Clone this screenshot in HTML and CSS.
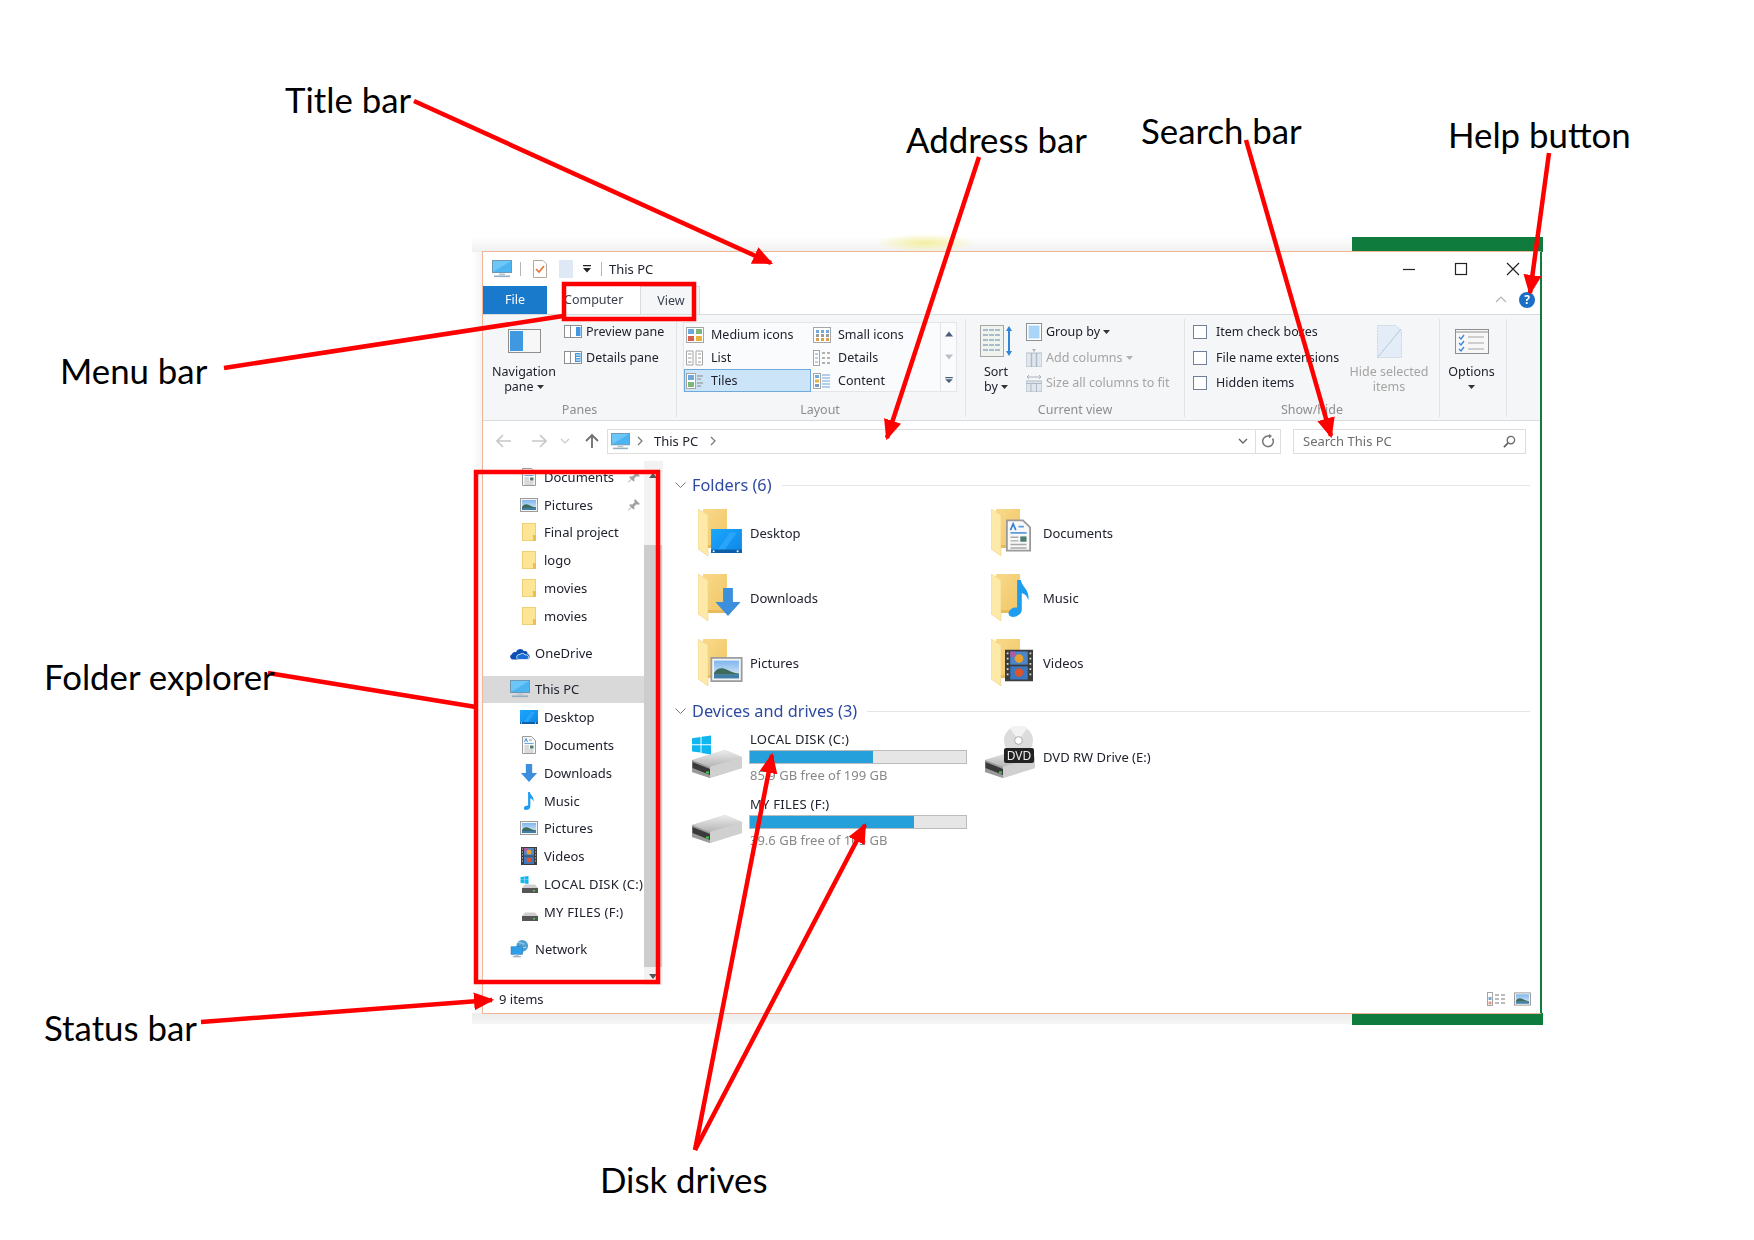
FILE: index.html
```html
<!DOCTYPE html>
<html lang="en">
<head>
<meta charset="utf-8">
<title>File Explorer parts</title>
<link rel="stylesheet" href="styles.css">
</head>
<body>
<svg class="defs" aria-hidden="true">
  <defs>
    <linearGradient id="g-screen" x1="0" y1="0" x2="1" y2="1"><stop offset="0" stop-color="#1aa7ff"/><stop offset="1" stop-color="#0f86e6"/></linearGradient>
    <linearGradient id="g-folder" x1="0" y1="0" x2="1" y2="1"><stop offset="0" stop-color="#f8d98a"/><stop offset="1" stop-color="#f2c666"/></linearGradient>
    <linearGradient id="g-drive" x1="0" y1="0" x2="0" y2="1"><stop offset="0" stop-color="#ececec"/><stop offset="1" stop-color="#b5b5b5"/></linearGradient>
    <linearGradient id="g-sky" x1="0" y1="0" x2="0" y2="1"><stop offset="0" stop-color="#7fb6ee"/><stop offset="1" stop-color="#e4eef6"/></linearGradient>
    <symbol id="i-pc" viewBox="0 0 20 18"><rect x=".5" y=".5" width="19" height="12" fill="#4db4f2" stroke="#6d98b3"/><path d="M1 12 L1 1 L19 1 Z" fill="#6cc6f7"/><rect x="7" y="13.5" width="6" height="1.5" fill="#b9c6cf"/><rect x="2" y="15.5" width="16" height="1.6" fill="#94aec0"/></symbol>
    <symbol id="i-desktop" viewBox="0 0 18 14"><rect width="18" height="14" fill="url(#g-screen)"/><path d="M4 12L11 2H15L8 12Z" fill="#3db4ff" opacity=".5"/><rect y="12" width="18" height="2" fill="#0b5fa8"/><rect x="1" y="12.5" width="1" height="1" fill="#fff"/><rect x="15" y="12.5" width="1" height="1" fill="#fff"/></symbol>
    <symbol id="i-doc" viewBox="0 0 14 18"><path d="M.5.5H9.5L13.5 4.5V17.5H.5Z" fill="#f8f8f8" stroke="#9a9a9a"/><path d="M2.500 6L4 2.500L5.500 6" fill="none" stroke="#2f7fd6" stroke-width=".9"/><path d="M7 4H10M2.500 7.500H11.500" stroke="#5f9bdc" stroke-width=".9"/><path d="M2.500 10H7M2.500 12H7M2.500 14H11.500M2.500 16H11.500" stroke="#a9a9a9" stroke-width=".8"/><rect x="8" y="9.500" width="3.500" height="3" fill="#4f7d74"/></symbol>
    <symbol id="i-pic" viewBox="0 0 18 14"><rect x=".5" y=".5" width="17" height="13" fill="#f4f4f4" stroke="#9c9c9c"/><rect x="2" y="2" width="14" height="10" fill="url(#g-sky)"/><path d="M2 9C4 5.500 7 6 9 7C11 8 13 9 16 9.300V10H2Z" fill="#3c6b5c"/><rect x="2" y="9.800" width="14" height="2.200" fill="#3f7ea8"/></symbol>
    <symbol id="i-fold" viewBox="0 0 14 18"><rect x=".5" y=".5" width="13" height="17" fill="#fde596" stroke="#f0cf70"/><rect x="11" y="12" width="3" height="6" fill="#eabf50"/></symbol>
    <symbol id="i-down" viewBox="0 0 18 20"><path d="M5.500 0H12.500V10H18L9 20L0 10H5.500Z" fill="#3b8fdc"/></symbol>
    <symbol id="i-note" viewBox="0 0 12 20"><path d="M5 0H7C7.500 4 12 5 11 11C10.500 8.500 9 7.500 7.500 7V16C7.500 18.500 5 20 2.500 20C0 20 -.5 17 2 15.500C3 15 4.500 14.800 5 15Z" fill="#1c9df0"/></symbol>
    <symbol id="i-film" viewBox="0 0 16 18"><rect width="16" height="18" fill="#3c3c3c"/><rect x="3" y="1" width="10" height="7.500" fill="#4a86c8"/><rect x="3" y="9.500" width="10" height="7.500" fill="#3a78c2"/><circle cx="8" cy="5" r="2.500" fill="#e9a02e"/><rect x="3" y="1" width="3" height="3" fill="#d84a9a" opacity=".7"/><circle cx="8" cy="13" r="2.500" fill="#d8552f"/><path d="M1 2H2M1 5H2M1 8H2M1 11H2M1 14H2M14 2H15M14 5H15M14 8H15M14 11H15M14 14H15" stroke="#ddd"/></symbol>
    <symbol id="i-drive-s" viewBox="0 0 16 9"><path d="M3 .5H13L16 4V9H0V4Z" fill="#cfcfcf"/><rect y="4" width="16" height="5" fill="#555"/><rect x="11" y="6" width="2" height="1.500" fill="#3fd04e"/></symbol>
    <symbol id="i-win" viewBox="0 0 20 20"><path d="M0 3L9 1.500V9.300H0ZM10 1.300L20 0V9.300H10ZM0 10.300H9V18L0 16.800ZM10 10.300H20V20L10 18.500Z" fill="#0fb6f0"/></symbol>
    <symbol id="i-cloud" viewBox="0 0 20 13"><path d="M3 13C0 13 -1 9 2 7.800C2.500 5.800 4.500 5 6 5.800C7.500 2 12 1.500 14 4.800C16 4 18 5.500 17.500 7.500C20.500 8 20.500 13 17 13Z" fill="#0c4fb3"/><path d="M8 13C5.500 11 7 7.500 10 8C11 6.500 14 6.500 15 8.300C17 8 19 9 18.800 11.500L17 13Z" fill="#1a6fd4" stroke="#fff" stroke-width=".8"/></symbol>
    <symbol id="i-net" viewBox="0 0 20 20"><circle cx="12.500" cy="6.500" r="6.500" fill="#4f9fd0"/><path d="M8 3C11 2 12 5 15 4.500M9 9C11 7 14 9 17 8" stroke="#bde0f5" fill="none"/><rect y="7.500" width="13" height="8.500" fill="#2e9ee8" stroke="#2d79b8" stroke-width=".6"/><rect x="4" y="16" width="5" height="1.500" fill="#a8bac6"/><rect x="2" y="18" width="9" height="1.200" fill="#8fa4b3"/></symbol>
    <symbol id="i-pin" viewBox="0 0 12 12"><path d="M7 0L12 5L10.500 5.800L8.500 5.300L6.200 7.600L6.500 9.800L5.500 10.500L3.500 8.500L.5 11.500L0 11L3 8L1.200 6.200L2 5.300L4.300 5.500L6.600 3.400L6.200 1.200Z" fill="#a0a0a0"/></symbol>
    <symbol id="i-bigfold" viewBox="0 0 46 48"><rect x="5" width="24" height="36" fill="url(#g-folder)"/><path d="M0 0L10 6V47L0 40Z" fill="#fde9a8" stroke="#f0d489" stroke-width=".6"/><path d="M10 36H29V39H10Z" fill="#e8bc5c"/></symbol>
    <symbol id="i-bigdrive" viewBox="0 0 50 28"><path d="M0 10L33 0L50 7V18L18 28L0 22Z" fill="#c9c9c9"/><path d="M0 10L33 0L50 7L18 17Z" fill="url(#g-drive)"/><path d="M0 10L18 17V28L0 22Z" fill="#9a9a9a"/><path d="M18 17L50 7V18L18 28Z" fill="#d0d0d0"/><path d="M.5 12L18 19V25L.5 18Z" fill="#3a3a3a"/><rect x="14" y="21.500" width="3" height="2" fill="#3fd04e"/></symbol>
    <symbol id="i-caret" viewBox="0 0 7 4"><path d="M0 0H7L3.500 4Z" fill="#333"/></symbol>
  </defs>
</svg>

<main class="canvas">
  <div class="backdrop backdrop-top"></div>
  <div class="backdrop backdrop-glow"></div>
  <div class="backdrop backdrop-left"></div>
  <div class="backdrop backdrop-bottom"></div>
  <div class="backdrop green-top"></div>
  <div class="backdrop green-bottom"></div>

  <section class="window">
    <header class="titlebar">
      <svg class="qa-pc"><use href="#i-pc"/></svg>
      <i class="qa-sep"></i>
      <svg class="qa-check" viewBox="0 0 14 18"><path d="M.5.5H10L13.500 4V17.500H.5Z" fill="#fff" stroke="#b5a89c"/><path d="M3 9L6 12L11 6" stroke="#e8743a" stroke-width="1.700" fill="none"/></svg>
      <svg class="qa-page" viewBox="0 0 14 18"><rect width="14" height="18" fill="#dfe8f5"/></svg>
      <svg class="qa-drop" viewBox="0 0 8 8"><path d="M0 0H8V1.200H0ZM0 3H8L4 7.500Z" fill="#222"/></svg>
      <i class="qa-sep qa-sep-2"></i>
      <span class="title-text">This PC</span>
      <div class="win-controls">
        <svg class="win-btn" viewBox="0 0 52 14"><path d="M20 7.500H32" stroke="#222" stroke-width="1.200"/></svg>
        <svg class="win-btn" viewBox="0 0 52 14"><rect x="20.500" y="1.500" width="11" height="11" fill="none" stroke="#222" stroke-width="1.200"/></svg>
        <svg class="win-btn" viewBox="0 0 52 14"><path d="M20 1L32 13M32 1L20 13" stroke="#222" stroke-width="1.200"/></svg>
      </div>
    </header>

    <nav class="tabs">
      <div class="tab-file">File</div>
      <div class="tab-computer">Computer</div>
      <div class="tab-view">View</div>
      <svg class="ribbon-up" viewBox="0 0 12 7"><path d="M1 6L6 1L11 6" fill="none" stroke="#b5b5b5" stroke-width="1.200"/></svg>
      <div class="help">?</div>
    </nav>

    <div class="ribbon">
      <div class="group group-panes">
        <div class="group-body">
          <div class="big big-nav">
            <svg class="big-icon-nav" viewBox="0 0 33 24"><rect x=".5" y=".5" width="32" height="23" fill="#f7f7f7" stroke="#8f8f8f"/><rect x="2" y="2" width="13" height="20" fill="#3f98e0"/></svg>
            <div class="big-text">Navigation<br>pane <svg class="caret"><use href="#i-caret"/></svg></div>
          </div>
          <div class="small-col">
            <div class="small"><svg class="sm-pane" viewBox="0 0 18 13"><rect x=".5" y=".5" width="17" height="12" fill="#fff" stroke="#8f8f8f"/><path d="M6.500 1V12" stroke="#8f8f8f"/><rect x="12" y="2" width="4.500" height="9" fill="#3f98e0"/></svg><span>Preview pane</span></div>
            <div class="small"><svg class="sm-pane" viewBox="0 0 18 13"><rect x=".5" y=".5" width="17" height="12" fill="#fff" stroke="#8f8f8f"/><path d="M6.500 1V12" stroke="#8f8f8f"/><rect x="11" y="2" width="5.500" height="9" fill="#3f98e0"/><path d="M12 4H16M12 6.500H16M12 9H16" stroke="#fff"/></svg><span>Details pane</span></div>
          </div>
        </div>
        <div class="group-label">Panes</div>
      </div>

      <div class="group group-layout">
        <div class="group-body">
          <div class="gallery">
            <div class="gallery-grid">
              <div class="gal"><svg class="gal-icon" viewBox="0 0 18 16"><rect x=".5" y=".5" width="17" height="15" fill="#fff" stroke="#a5a5a5"/><rect x="2" y="2" width="6" height="5" fill="#6fa8dc"/><rect x="10" y="2" width="6" height="5" fill="#7cb87c"/><rect x="2" y="9" width="6" height="5" fill="#d8604c"/><rect x="10" y="9" width="6" height="5" fill="#e8b23c"/></svg><span>Medium icons</span></div>
              <div class="gal"><svg class="gal-icon" viewBox="0 0 18 16"><rect x=".5" y=".5" width="17" height="15" fill="#fff" stroke="#a5a5a5"/><path d="M3 3h3v3h-3zM8 3h3v3h-3zM13 3h3v3h-3z" fill="#6fa8dc"/><path d="M3 7h3v3h-3zM8 7h3v3h-3zM13 7h3v3h-3z" fill="#9a9a9a"/><path d="M3 11h3v3h-3zM8 11h3v3h-3zM13 11h3v3h-3z" fill="#d8a04c"/></svg><span>Small icons</span></div>
              <div class="gal"><svg class="gal-icon" viewBox="0 0 18 16"><path d="M.5 1H7V15H.5ZM10 1H16.500V15H10Z" fill="#fff" stroke="#a5a5a5"/><path d="M2 4H5.500M2 8H5.500M2 12H5.500M12 4H15M12 8H15M12 12H15" stroke="#999"/></svg><span>List</span></div>
              <div class="gal"><svg class="gal-icon" viewBox="0 0 18 16"><rect x=".5" y=".5" width="6" height="15" fill="#fff" stroke="#a5a5a5"/><path d="M2 4H5M2 8H5M2 12H5" stroke="#7a9cc0"/><path d="M9 3H12M14 3H17M9 8H12M14 8H17M9 13H12M14 13H17" stroke="#999" stroke-width="1.300"/></svg><span>Details</span></div>
              <div class="gal gal-on"><svg class="gal-icon" viewBox="0 0 18 16"><rect x=".5" y=".5" width="9" height="15" fill="#fff" stroke="#a5a5a5"/><rect x="2" y="2" width="6" height="5" fill="#6fa8dc"/><rect x="2" y="9" width="6" height="5" fill="#7cb87c"/><path d="M11 3H17M11 6H15M11 10H17M11 13H15" stroke="#888"/></svg><span>Tiles</span></div>
              <div class="gal"><svg class="gal-icon" viewBox="0 0 18 16"><rect x=".5" y=".5" width="7" height="15" fill="#fff" stroke="#a5a5a5"/><rect x="2" y="2" width="4" height="3" fill="#6fa8dc"/><rect x="2" y="6.500" width="4" height="3" fill="#e8b23c"/><rect x="2" y="11" width="4" height="3" fill="#7a9cc0"/><path d="M9 2H17M9 5H17M9 8H17M9 11H17M9 14H17" stroke="#6aa3de"/></svg><span>Content</span></div>
            </div>
            <div class="gallery-scroll">
              <svg class="gal-arrow" viewBox="0 0 10 6"><path d="M5 0L10 6H0Z" fill="#4c5f78"/></svg>
              <svg class="gal-arrow" viewBox="0 0 10 6"><path d="M0 0H10L5 6Z" fill="#b9bfc7"/></svg>
              <svg class="gal-arrow" viewBox="0 0 10 8"><path d="M0 0H10V1.500H0ZM0 3H10L5 8Z" fill="#4c5f78"/></svg>
            </div>
          </div>
        </div>
        <div class="group-label">Layout</div>
      </div>

      <div class="group group-view">
        <div class="group-body">
          <div class="big big-sort">
            <svg class="big-icon-sort" viewBox="0 0 33 32"><rect x=".5" y=".5" width="23" height="31" fill="#eef3ee" stroke="#a5a5a5"/><path d="M3 5H21M3 10H21M3 15H21M3 20H21M3 25H21" stroke="#a8bcd0" stroke-width="2" stroke-dasharray="5 1"/><path d="M29 1L32 6H30V26H32L29 31L26 26H28V6H26Z" fill="#2f86d6"/></svg>
            <div class="big-text">Sort<br>by <svg class="caret"><use href="#i-caret"/></svg></div>
          </div>
          <div class="small-col">
            <div class="small"><svg class="sm-view" viewBox="0 0 16 18"><rect x=".5" y=".5" width="15" height="17" fill="#fff" stroke="#8f8f8f"/><rect x="2.500" y="2.500" width="11" height="13" fill="#a9d5f7"/></svg><span>Group by <svg class="caret"><use href="#i-caret"/></svg></span></div>
            <div class="small small-off"><svg class="sm-view" viewBox="0 0 16 18"><rect y="4" width="16" height="14" fill="#dfe6ee" stroke="#b5bec8"/><path d="M5.500 4V18M10.500 4V18" stroke="#aeb9c5" stroke-width="1.400"/><path d="M6 0H10L8 3Z" fill="#a8b3bf"/></svg><span>Add columns <svg class="caret caret-off"><use href="#i-caret"/></svg></span></div>
            <div class="small small-off"><svg class="sm-view" viewBox="0 0 16 18"><path d="M1 3H15M3 1L1 3L3 5M13 1L15 3L13 5" stroke="#a8b3bf" fill="none"/><rect y="7" width="16" height="11" fill="#dfe6ee" stroke="#aeb9c5"/><path d="M0 9.500H16M5 9.500V18M10.500 9.500V18" stroke="#aeb9c5"/></svg><span>Size all columns to fit</span></div>
          </div>
        </div>
        <div class="group-label">Current view</div>
      </div>

      <div class="group group-show">
        <div class="group-body">
          <div class="small-col check-col">
            <label class="small"><i class="check"></i><span>Item check boxes</span></label>
            <label class="small"><i class="check"></i><span>File name extensions</span></label>
            <label class="small"><i class="check"></i><span>Hidden items</span></label>
          </div>
          <div class="big big-hide">
            <svg class="big-icon-hide" viewBox="0 0 25 33"><path d="M.5.5H19L24.500 6V32.500H.5Z" fill="#e4ecf7" stroke="#c9d6e6" stroke-dasharray="2 1"/><path d="M.5 32.500L24 4" stroke="#b5c6db"/></svg>
            <div class="big-text big-text-off">Hide selected<br>items</div>
          </div>
        </div>
        <div class="group-label">Show/hide</div>
      </div>

      <div class="group group-options">
        <div class="group-body">
          <div class="big big-options">
            <svg class="big-icon-options" viewBox="0 0 34 25"><rect x=".5" y=".5" width="33" height="24" fill="#f7f7f7" stroke="#8f8f8f"/><path d="M.5 3H33.500" stroke="#8f8f8f"/><path d="M4 8L6 10L9 6M4 14L6 16L9 12M4 20L6 22L9 18" stroke="#3b85d6" stroke-width="1.300" fill="none"/><path d="M13 8H29M13 14H29M13 20H29" stroke="#a5a5a5"/></svg>
            <div class="big-text">Options<br><svg class="caret"><use href="#i-caret"/></svg></div>
          </div>
        </div>
        <div class="group-label"></div>
      </div>
    </div>

    <div class="addressbar">
      <svg class="nav-back" viewBox="0 0 16 14"><path d="M1 7H15M7 1L1 7L7 13" fill="none" stroke="#c8c8c8" stroke-width="1.600"/></svg>
      <svg class="nav-fwd" viewBox="0 0 16 14"><path d="M1 7H15M9 1L15 7L9 13" fill="none" stroke="#c8c8c8" stroke-width="1.600"/></svg>
      <svg class="nav-hist" viewBox="0 0 10 6"><path d="M1 1L5 5L9 1" fill="none" stroke="#c8c8c8" stroke-width="1.200"/></svg>
      <svg class="nav-up" viewBox="0 0 16 16"><path d="M8 15V2M2 8L8 2L14 8" fill="none" stroke="#6e6e6e" stroke-width="1.800"/></svg>
      <div class="addr-box">
        <svg class="addr-pc"><use href="#i-pc"/></svg>
        <svg class="crumb" viewBox="0 0 6 10"><path d="M1 1L5 5L1 9" fill="none" stroke="#777" stroke-width="1.200"/></svg>
        <span class="addr-text">This PC</span>
        <svg class="crumb crumb-end" viewBox="0 0 6 10"><path d="M1 1L5 5L1 9" fill="none" stroke="#777" stroke-width="1.200"/></svg>
        <svg class="addr-chev" viewBox="0 0 10 6"><path d="M1 1L5 5L9 1" fill="none" stroke="#666" stroke-width="1.400"/></svg>
        <div class="addr-refresh"><svg class="refresh-icon" viewBox="0 0 14 14"><path d="M11.500 4.500A5.300 5.300 0 1 1 7 2H10" fill="none" stroke="#777" stroke-width="1.500"/><path d="M8 0L11 2L8 4.500Z" fill="#777"/></svg></div>
      </div>
      <div class="search-box">
        <span>Search This PC</span>
        <svg class="search-icon" viewBox="0 0 14 14"><circle cx="8.500" cy="5.500" r="4" fill="none" stroke="#666" stroke-width="1.400"/><path d="M5.500 8.500L1 13" stroke="#666" stroke-width="2"/></svg>
      </div>
    </div>

    <div class="body">
      <aside class="sidebar">
        <div class="tree">
          <div class="row lv2"><svg class="ti ti-tall"><use href="#i-doc"/></svg><span>Documents</span><svg class="pin"><use href="#i-pin"/></svg></div>
          <div class="row lv2"><svg class="ti ti-wide"><use href="#i-pic"/></svg><span>Pictures</span><svg class="pin"><use href="#i-pin"/></svg></div>
          <div class="row lv2"><svg class="ti ti-tall"><use href="#i-fold"/></svg><span>Final project</span></div>
          <div class="row lv2"><svg class="ti ti-tall"><use href="#i-fold"/></svg><span>logo</span></div>
          <div class="row lv2"><svg class="ti ti-tall"><use href="#i-fold"/></svg><span>movies</span></div>
          <div class="row lv2"><svg class="ti ti-tall"><use href="#i-fold"/></svg><span>movies</span></div>
          <div class="row lv1 tree-gap"><svg class="ti ti-root"><use href="#i-cloud"/></svg><span>OneDrive</span></div>
          <div class="row lv1 tree-gap row-on"><svg class="ti ti-root"><use href="#i-pc"/></svg><span>This PC</span></div>
          <div class="row lv2"><svg class="ti ti-wide"><use href="#i-desktop"/></svg><span>Desktop</span></div>
          <div class="row lv2"><svg class="ti ti-tall"><use href="#i-doc"/></svg><span>Documents</span></div>
          <div class="row lv2"><svg class="ti ti-tall"><use href="#i-down"/></svg><span>Downloads</span></div>
          <div class="row lv2"><svg class="ti ti-tall"><use href="#i-note"/></svg><span>Music</span></div>
          <div class="row lv2"><svg class="ti ti-wide"><use href="#i-pic"/></svg><span>Pictures</span></div>
          <div class="row lv2"><svg class="ti ti-tall"><use href="#i-film"/></svg><span>Videos</span></div>
          <div class="row lv2"><span class="ti-stack"><svg class="ti-win"><use href="#i-win"/></svg><svg class="ti-drive"><use href="#i-drive-s"/></svg></span><span class="caps">LOCAL DISK (C:)</span></div>
          <div class="row lv2"><span class="ti-stack"><svg class="ti-drive"><use href="#i-drive-s"/></svg></span><span class="caps">MY FILES (F:)</span></div>
          <div class="row lv1 tree-gap"><svg class="ti ti-root"><use href="#i-net"/></svg><span>Network</span></div>
        </div>
        <div class="scrollbar">
          <svg class="scroll-top" viewBox="0 0 8 5"><path d="M4 0L8 5H0Z" fill="#555"/></svg>
          <div class="thumb"></div>
          <svg class="scroll-bot" viewBox="0 0 8 5"><path d="M0 0H8L4 5Z" fill="#555"/></svg>
        </div>
      </aside>

      <div class="content">
        <div class="sect">
          <svg class="sect-chev" viewBox="0 0 11 6"><path d="M.5.5L5.500 5.500L10.500.5" fill="none" stroke="#7a7a7a"/></svg>
          <span class="sect-title">Folders (6)</span><i class="sect-line"></i>
        </div>
        <div class="tiles">
          <div class="tile"><span class="folder"><svg class="folder-base"><use href="#i-bigfold"/></svg><svg class="ov ov-desktop"><use href="#i-desktop"/></svg></span><span>Desktop</span></div>
          <div class="tile"><span class="folder"><svg class="folder-base"><use href="#i-bigfold"/></svg><svg class="ov ov-doc"><use href="#i-doc"/></svg></span><span>Documents</span></div>
          <div class="tile"><span class="folder"><svg class="folder-base"><use href="#i-bigfold"/></svg><svg class="ov ov-down"><use href="#i-down"/></svg></span><span>Downloads</span></div>
          <div class="tile"><span class="folder"><svg class="folder-base"><use href="#i-bigfold"/></svg><svg class="ov ov-note"><use href="#i-note"/></svg></span><span>Music</span></div>
          <div class="tile"><span class="folder"><svg class="folder-base"><use href="#i-bigfold"/></svg><svg class="ov ov-pic"><use href="#i-pic"/></svg></span><span>Pictures</span></div>
          <div class="tile"><span class="folder"><svg class="folder-base"><use href="#i-bigfold"/></svg><svg class="ov ov-film"><use href="#i-film"/></svg></span><span>Videos</span></div>
        </div>
        <div class="sect">
          <svg class="sect-chev" viewBox="0 0 11 6"><path d="M.5.5L5.500 5.500L10.500.5" fill="none" stroke="#7a7a7a"/></svg>
          <span class="sect-title">Devices and drives (3)</span><i class="sect-line"></i>
        </div>
        <div class="drives">
          <div class="drive">
            <span class="drive-icon"><svg class="drive-win"><use href="#i-win"/></svg><svg class="drive-hdd"><use href="#i-bigdrive"/></svg></span>
            <div class="drive-info"><div class="caps">LOCAL DISK (C:)</div><div class="meter"><div class="meter-fill" style="width:57%"></div></div><div class="drive-free">85.9 GB free of 199 GB</div></div>
          </div>
          <div class="drive">
            <span class="drive-icon"><svg class="drive-hdd"><use href="#i-bigdrive"/></svg><svg class="drive-disc" viewBox="0 0 30 30"><circle cx="15" cy="15" r="15" fill="#dcdcdc"/><path d="M15 15L6 2A15 15 0 0 1 24 2Z" fill="#f2f2f2"/><circle cx="15" cy="15" r="4" fill="#fff" stroke="#aaa"/></svg><b class="dvd-badge">DVD</b></span>
            <div class="drive-name">DVD RW Drive (E:)</div>
          </div>
          <div class="drive">
            <span class="drive-icon"><svg class="drive-hdd"><use href="#i-bigdrive"/></svg></span>
            <div class="drive-info"><div class="caps">MY FILES (F:)</div><div class="meter"><div class="meter-fill" style="width:76%"></div></div><div class="drive-free">39.6 GB free of 165 GB</div></div>
          </div>
        </div>
      </div>
    </div>

    <footer class="status">
      <span>9 items</span>
      <svg class="st-details" viewBox="0 0 19 14"><rect x=".5" y=".5" width="5" height="13" fill="#fff" stroke="#a5a5a5"/><rect x="1.500" y="5" width="3" height="3" fill="#7aa7d6"/><rect x="1.500" y="9.500" width="3" height="3" fill="#e09a8a"/><path d="M8 3H12M14 3H18M8 7H12M14 7H18M8 11H12M14 11H18" stroke="#a5a5a5" stroke-width="1.300"/></svg>
      <svg class="st-tiles"><use href="#i-pic"/></svg>
    </footer>
  </section>

  <svg class="overlay" viewBox="0 0 1754 1240">
    <defs><marker id="head" markerWidth="4.500" markerHeight="4" refX="4" refY="2" orient="auto"><path d="M0 0L4.500 2L0 4Z" fill="#f00"/></marker></defs>
    <g fill="none" stroke="#f00" stroke-width="4.500">
      <rect x="564" y="284" width="130" height="35"/>
      <rect x="476" y="472" width="182" height="510"/>
      <path d="M414 101L771 263" marker-end="url(#head)"/>
      <path d="M979 157L887 438" marker-end="url(#head)"/>
      <path d="M1246 140L1331 436" marker-end="url(#head)"/>
      <path d="M1549 153L1530 293" marker-end="url(#head)"/>
      <path d="M224 368L563 316"/>
      <path d="M268 673L476 707"/>
      <path d="M201 1022L492 1000" marker-end="url(#head)"/>
      <path d="M695 1150L772 755" marker-end="url(#head)"/>
      <path d="M695 1150L865 825" marker-end="url(#head)"/>
    </g>
  </svg>

  <div class="callout c-title">Title bar</div>
  <div class="callout c-address">Address bar</div>
  <div class="callout c-search">Search bar</div>
  <div class="callout c-help">Help button</div>
  <div class="callout c-menu">Menu bar</div>
  <div class="callout c-folder">Folder explorer</div>
  <div class="callout c-status">Status bar</div>
  <div class="callout c-disk">Disk drives</div>
</main>
</body>
</html>
```

FILE: styles.css
```css
* { box-sizing: border-box; }
html, body { margin: 0; padding: 0; background: #fff; }
body { font-family: "Noto Sans", "Open Sans", sans-serif; color: #20222e; }
svg { display: block; flex: none; }
.defs { position: absolute; width: 0; height: 0; }

.canvas { position: relative; width: 1754px; height: 1240px; overflow: hidden; background: #fff; }

/* what lies behind the window in the photographed figure */
.backdrop { position: absolute; }
.backdrop-top { left: 472px; top: 237px; width: 881px; height: 15px; background: linear-gradient(#fff, #f0f0f0); }
.backdrop-glow { left: 875px; top: 234px; width: 100px; height: 18px; background: radial-gradient(closest-side, #f3efa0, rgba(243, 239, 160, 0)); }
.backdrop-left { left: 472px; top: 252px; width: 10px; height: 761px; background: linear-gradient(90deg, #fff, #f4f4f4); }
.backdrop-bottom { left: 472px; top: 1013px; width: 881px; height: 11px; background: linear-gradient(#ececec, #f6f6f6); }
.green-top { left: 1352px; top: 237px; width: 191px; height: 15px; background: #0f7c3e; }
.green-bottom { left: 1352px; top: 1013px; width: 191px; height: 12px; background: #0f7c3e; }

/* window */
.window {
  position: absolute; left: 482px; top: 251px; width: 1060px; height: 763px;
  display: flex; flex-direction: column;
  background: #fff; border: 1px solid #eeb596; border-right: 2px solid #0f7c3e;
  font-size: 13px; line-height: 16px;
  filter: blur(.5px);
}
.caps { letter-spacing: .25px; }

.titlebar { height: 34px; display: flex; align-items: center; flex: none; }
.qa-pc { width: 20px; height: 18px; margin-left: 9px; }
.qa-sep { width: 1px; height: 14px; background: #b5b5b5; margin-left: 8px; }
.qa-check { width: 14px; height: 18px; margin-left: 12px; }
.qa-page { width: 14px; height: 18px; margin-left: 12px; }
.qa-drop { width: 8px; height: 8px; margin-left: 10px; }
.qa-sep-2 { margin-left: 10px; }
.title-text { margin: -1px 0 0 7px; }
.win-controls { margin: -1px 1px 0 auto; display: flex; }
.win-btn { width: 52px; height: 14px; }

.tabs { height: 28px; display: flex; flex: none; align-items: stretch; position: relative; font-size: 12.500px; }
.tab-file { width: 64px; background: #1979ca; color: #fff; text-align: center; line-height: 27px; }
.tab-computer { width: 93px; padding-left: 17px; line-height: 28px; color: #3a3f4c; }
.tab-view { width: 60px; padding-left: 2px; text-align: center; line-height: 27px; background: #f5f6f7; border: 1px solid #dadbdc; border-bottom: 0; color: #3a3f4c; }
.ribbon-up { width: 12px; height: 7px; margin: 10px 0 0 auto; }
.help { width: 16px; height: 16px; margin: 6px 5px 0 12px; border-radius: 50%; background: #1a6fc4; color: #fff; font-size: 12px; font-weight: 700; line-height: 16px; text-align: center; }

.ribbon { height: 107px; flex: none; display: flex; background: #f5f6f7; border-top: 1px solid #dadbdc; border-bottom: 1px solid #dadbdc; }
.group { margin: 4px 0 3px; display: flex; flex-direction: column; border-right: 1px solid #e2e3e4; flex: none; }
.group-panes { width: 194px; }
.group-layout { width: 289px; padding-left: 6px; }
.group-layout .group-label { margin-right: 8px; }
.group-view { width: 219px; }
.group-show { width: 255px; }
.group-options { width: 67px; }
.group-body { height: 83px; display: flex; flex: none; }
.group-label { height: 15px; text-align: center; color: #8e8e8e; line-height: 16px; font-size: 12.500px; }

.big { display: flex; flex-direction: column; align-items: center; flex: none; }
.big-text { text-align: center; line-height: 15px; margin-top: auto; padding-bottom: 8px; font-size: 12.500px; }
.big-text-off { color: #a4a4a4; }
.big-nav { width: 80px; margin-left: 1px; }
.big-icon-nav { width: 33px; height: 24px; margin-top: 10px; }
.big-sort { width: 60px; }
.big-icon-sort { width: 33px; height: 32px; margin-top: 6px; }
.big-hide { width: 84px; margin-left: 1px; }
.big-icon-hide { width: 25px; height: 33px; margin-top: 6px; }
.big-options { width: 63px; }
.big-icon-options { width: 34px; height: 25px; margin-top: 10px; }
.caret { width: 7px; height: 4px; display: inline-block; vertical-align: 2px; }
.caret-off { opacity: .35; }

.small-col { display: flex; flex-direction: column; }
.small { height: 25.750px; display: flex; align-items: center; gap: 4px; white-space: nowrap; font-size: 12.500px; }
.small-off { color: #a4a4a4; }
.sm-pane { width: 18px; height: 13px; }
.sm-view { width: 16px; height: 18px; }
.check-col { width: 161px; padding-left: 8px; }
.check { width: 14px; height: 14px; border: 1px solid #6f7f98; background: #fff; margin-right: 5px; }

.gallery { width: 274px; height: 70px; margin-top: 3px; display: flex; background: #fafbfc; border: 1px solid #e3e5e8; }
.gallery-grid { flex: 1; display: grid; grid-template-columns: 127px 129px; grid-auto-rows: 23px; }
.gal { display: flex; align-items: center; gap: 7px; padding-left: 2px; font-size: 12.500px; }
.gal-on { background: #cce4f7; outline: 1px solid #6ea9de; outline-offset: -1px; }
.gal-icon { width: 18px; height: 16px; }
.gallery-scroll { width: 16px; display: flex; flex-direction: column; align-items: center; justify-content: space-around; border-left: 1px solid #e3e5e8; }
.gal-arrow { width: 8px; height: 6px; }

/* address row */
.addressbar { height: 40px; flex: none; display: flex; align-items: center; }
.nav-back { width: 16px; height: 14px; margin-left: 13px; }
.nav-fwd { width: 16px; height: 14px; margin-left: 19px; }
.nav-hist { width: 10px; height: 6px; margin-left: 13px; }
.nav-up { width: 16px; height: 16px; margin-left: 14px; }
.addr-box { width: 674px; height: 25px; margin-left: 7px; border: 1px solid #dedede; display: flex; align-items: center; }
.addr-pc { width: 19px; height: 17px; margin-left: 3px; }
.crumb { width: 6px; height: 10px; margin-left: 7px; }
.addr-text { margin-left: 11px; }
.crumb-end { margin-left: 12px; }
.addr-chev { width: 10px; height: 6px; margin-left: auto; }
.addr-refresh { width: 25px; height: 23px; margin-left: 7px; border-left: 1px solid #dedede; display: flex; align-items: center; justify-content: center; }
.refresh-icon { width: 14px; height: 14px; }
.search-box { width: 233px; height: 25px; margin-left: 12px; border: 1px solid #dedede; display: flex; align-items: center; justify-content: space-between; padding: 0 9px; color: #6d6d6d; }
.search-icon { width: 13px; height: 13px; }

/* body */
.body { flex: 1; min-height: 0; display: flex; }
.sidebar { width: 180px; flex: none; display: flex; overflow: hidden; border-right: 1px solid #f3f3f3; }
.tree { width: 161px; padding-top: 2px; flex: none; }
.row { height: 27.800px; display: flex; align-items: center; white-space: nowrap; }
.lv2 { padding-left: 37px; }
.lv1 { padding-left: 27px; }
.tree-gap { margin-top: 9px; }
.row-on { background: #d9d9d9; margin-top: 9px; }
.ti { width: 18px; height: 18px; margin-right: 6px; }
.ti-tall { width: 18px; height: 18px; }
.ti-wide { width: 18px; height: 14px; }
.ti-root { width: 20px; height: 18px; margin-right: 5px; }
.ti-stack { width: 18px; height: 20px; margin-right: 6px; display: flex; flex-direction: column; justify-content: flex-end; align-items: flex-end; padding-bottom: 1px; }
.ti-win { width: 9px; height: 8px; align-self: flex-start; }
.ti-drive { width: 16px; height: 9px; }
.pin { width: 12px; height: 12px; margin-left: auto; margin-right: 4px; }

.scrollbar { width: 18px; flex: none; background: #f2f2f2; display: flex; flex-direction: column; align-items: center; }
.scroll-top { width: 8px; height: 5px; margin-top: 12px; }
.thumb { width: 100%; height: 422px; margin-top: 67px; background: #cdcdcd; }
.scroll-bot { width: 8px; height: 5px; margin-top: 7px; }

.content { flex: 1; min-width: 0; padding: 12px 10px 0 12px; }
.sect { height: 24px; display: flex; align-items: center; }
.sect-chev { width: 11px; height: 6px; margin-right: 6px; }
.sect-title { font-size: 16.300px; color: #2d4aa0; line-height: 24px; }
.sect-line { flex: 1; height: 1px; background: #e5e5e5; margin-left: 10px; }

.tiles, .drives { display: grid; grid-template-columns: 293px 293px; padding-left: 23px; }
.tiles { grid-auto-rows: 65px; margin: 3px 0 4px; }
.drives { grid-auto-rows: 65px; margin-top: 1px; }
.tile { display: flex; align-items: center; gap: 6px; }
.folder { position: relative; width: 46px; height: 48px; flex: none; }
.folder-base { width: 46px; height: 48px; }
.ov { position: absolute; }
.ov-desktop { left: 12px; top: 20px; width: 33px; height: 24px; }
.ov-doc { left: 15px; top: 10px; width: 25px; height: 33px; }
.ov-down { left: 16px; top: 14px; width: 28px; height: 28px; }
.ov-note { left: 16px; top: 6px; width: 24px; height: 37px; }
.ov-pic { left: 12px; top: 18px; width: 33px; height: 25px; }
.ov-film { left: 14px; top: 10px; width: 28px; height: 33px; }

.drive { display: flex; align-items: center; gap: 5px; margin-left: -6px; }
.drive-icon { position: relative; width: 52px; height: 48px; flex: none; }
.drive-hdd { position: absolute; left: 0; bottom: 3px; width: 50px; height: 28px; }
.drive-win { position: absolute; left: 0; top: 2px; width: 19px; height: 20px; z-index: 1; }
.drive-disc { position: absolute; left: 19px; top: -7px; width: 29px; height: 29px; }
.dvd-badge { position: absolute; left: 19px; top: 15px; width: 30px; height: 15px; background: #222; color: #eee; font-size: 12px; font-weight: 400; line-height: 15px; text-align: center; border-radius: 2px; }
.drive-name { margin-left: 1px; }
.drive-info { width: 218px; line-height: 18px; }
.drive-info .caps { margin-left: 1px; }
.meter { height: 14px; margin-top: 2px; background: #e6e6e6; border: 1px solid #bcbcbc; }
.meter-fill { height: 100%; background: #26a0da; }
.drive-free { margin: 2px 0 0 1px; color: #888; }

.status { height: 28px; flex: none; display: flex; align-items: center; padding-left: 16px; }
.st-details { width: 19px; height: 14px; margin-left: auto; }
.st-tiles { width: 17px; height: 14px; margin: 0 9px 0 8px; }

/* annotations */
.overlay { position: absolute; left: 0; top: 0; width: 1754px; height: 1240px; pointer-events: none; }
.callout { position: absolute; font-family: Lato, "Noto Sans", sans-serif; font-size: 34.800px; line-height: 42px; color: #000; white-space: nowrap; transform: translateY(-50%); }
.c-title { left: 285px; top: 100px; }
.c-address { left: 906px; top: 140px; }
.c-search { left: 1141px; top: 131px; }
.c-help { left: 1448px; top: 135px; }
.c-menu { left: 60px; top: 371px; }
.c-folder { left: 44px; top: 677px; }
.c-status { left: 44px; top: 1028px; }
.c-disk { left: 600px; top: 1180px; }
```
